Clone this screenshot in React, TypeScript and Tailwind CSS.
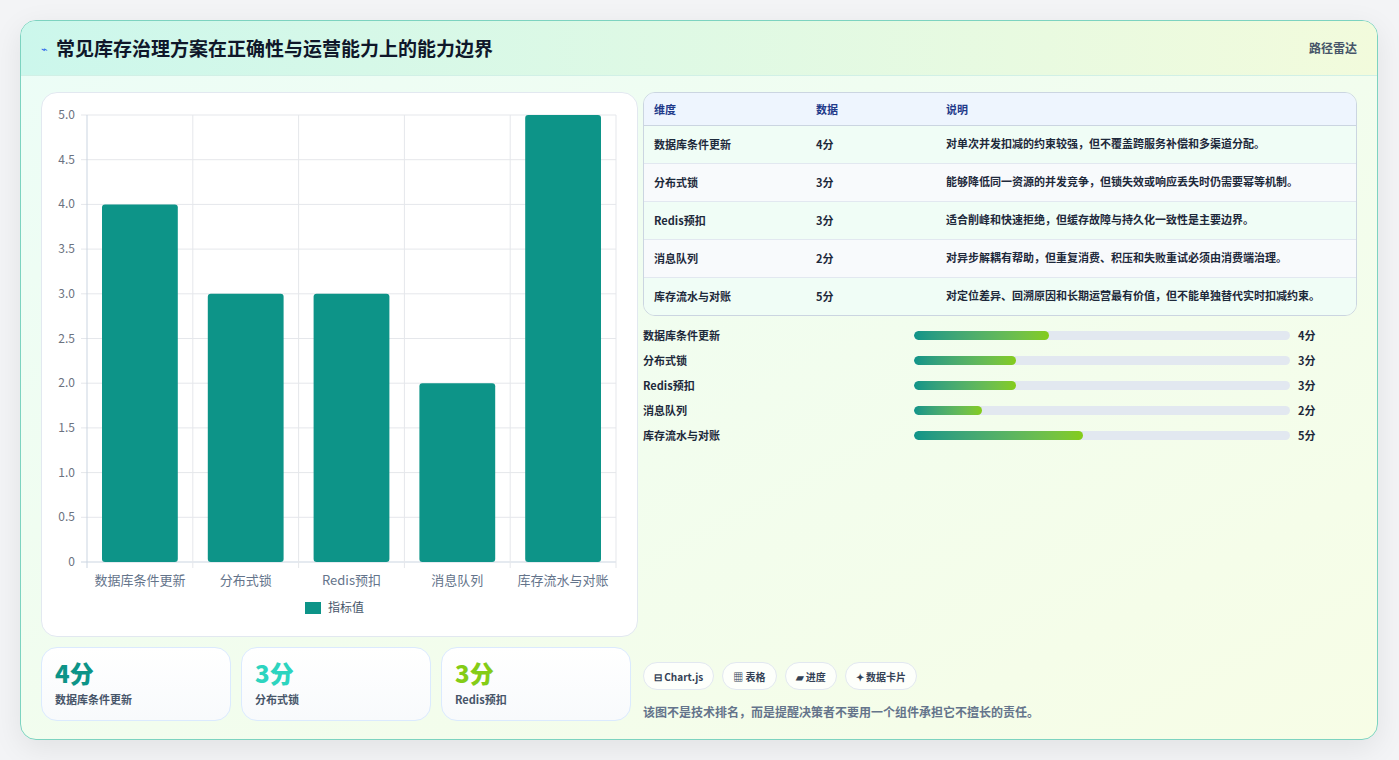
import React from "react";

const rows = [
  { n: "数据库条件更新", v: 4, d: "对单次并发扣减的约束较强，但不覆盖跨服务补偿和多渠道分配。" },
  { n: "分布式锁", v: 3, d: "能够降低同一资源的并发竞争，但锁失效或响应丢失时仍需要幂等机制。" },
  { n: "Redis预扣", v: 3, d: "适合削峰和快速拒绝，但缓存故障与持久化一致性是主要边界。" },
  { n: "消息队列", v: 2, d: "对异步解耦有帮助，但重复消费、积压和失败重试必须由消费端治理。" },
  { n: "库存流水与对账", v: 5, d: "对定位差异、回溯原因和长期运营最有价值，但不能单独替代实时扣减约束。" },
];

function Chart() {
  const x0 = 45, x1 = 574, y0 = 22, y1 = 469;
  const h = y1 - y0;
  const cw = (x1 - x0) / 5;
  const ticks = [0, 0.5, 1, 1.5, 2, 2.5, 3, 3.5, 4, 4.5, 5];
  return (
    <svg width="586" height="544" className="block" style={{ fontFamily: '"Noto Sans CJK SC", sans-serif' }}>
      {ticks.map((t) => {
        const y = y1 - (t / 5) * h;
        return (
          <g key={t}>
            <line x1={x0 - 6} x2={x1} y1={y} y2={y} stroke={t === 0 ? "#cbd5e1" : "#e5e7eb"} />
            <text x={x0 - 12} y={y + 4} fontSize="12" textAnchor="end" fill="#6b7280">{t === 0 ? "0" : t.toFixed(1)}</text>
          </g>
        );
      })}
      {[0, 1, 2, 3, 4, 5].map((i) => (
        <line key={i} x1={x0 + i * cw} x2={x0 + i * cw} y1={y0} y2={y1 + 6} stroke={i === 0 ? "#cbd5e1" : "#e5e7eb"} />
      ))}
      {rows.map((r, i) => {
        const bh = (r.v / 5) * h;
        return (
          <g key={r.n}>
            <rect x={x0 + i * cw + 15} y={y1 - bh} width={cw - 30} height={bh} rx="3" fill="#0d9488" />
            <text x={x0 + i * cw + cw / 2} y={y1 + 23} fontSize="13" textAnchor="middle" fill="#64748b">{r.n}</text>
          </g>
        );
      })}
      <rect x="263" y="509" width="16" height="12" fill="#0d9488" />
      <text x="286" y="519" fontSize="12" fill="#475569">指标值</text>
    </svg>
  );
}

export default function App() {
  const colors = ["text-[#0d9488]", "text-[#2dd4bf]", "text-[#84cc16]"];
  return (
    <div className="min-h-[760px] bg-[#f3f4f6] p-5 pb-5" style={{ fontFamily: '"Noto Sans CJK SC", "Noto Sans", sans-serif' }}>
      <div className="w-[1358px] h-[720px] rounded-2xl border border-[#7dd3c0] overflow-hidden shadow-[0_8px_30px_rgba(0,0,0,0.08)] bg-gradient-to-br from-[#ecfdf7] to-[#f7fde6] flex flex-col">
        <div className="h-[55px] flex items-center justify-between px-5 bg-gradient-to-r from-[#ccf7ec] to-[#f2fbdc] border-b border-[#d1f0e6]">
          <div className="flex items-center gap-2">
            <span className="text-[#2563eb] text-[11px]">⌁</span>
            <h1 className="text-[19px] font-bold text-[#0f172a]">常见库存治理方案在正确性与运营能力上的能力边界</h1>
          </div>
          <span className="text-[12px] font-semibold text-[#475569]">路径雷达</span>
        </div>
        <div className="flex gap-[5px] px-5 pt-4 pb-[18px] flex-1">
          <div className="w-[597px] flex flex-col gap-[10px]">
            <div className="h-[545px] rounded-2xl bg-white border border-[#e2e8f0]">
              <Chart />
            </div>
            <div className="flex gap-[10px]">
              {rows.slice(0, 3).map((r, i) => (
                <div key={r.n} className="w-[190px] h-[74px] rounded-2xl border border-[#dbeafe] bg-gradient-to-b from-white to-[#f8fafc] px-[13px] pt-[11px]">
                  <div className={`text-[24px] font-extrabold leading-[28px] ${colors[i]}`}>{r.v}分</div>
                  <div className="text-[11px] font-semibold text-[#475569] mt-[4px]">{r.n}</div>
                </div>
              ))}
            </div>
          </div>
          <div className="flex-1 flex flex-col">
            <div className="rounded-xl border border-[#cbd5e1] overflow-hidden text-[11px] font-semibold text-[#1e293b]">
              <div className="flex h-[33px] items-center bg-[#eef5fe] text-[#1e3a8a] border-b border-[#cbd5e1]">
                <div className="w-[172px] pl-[10px]">维度</div>
                <div className="w-[130px]">数据</div>
                <div className="flex-1">说明</div>
              </div>
              {rows.map((r, i) => (
                <div key={r.n} className={`flex py-[10px] border-b last:border-b-0 border-[#e2e8f0] ${i % 2 === 0 ? "bg-[#f0fdf6]" : "bg-[#f8fafc]"}`}>
                  <div className="w-[172px] pl-[10px]">{r.n}</div>
                  <div className="w-[130px]">{r.v}分</div>
                  <div className="flex-1 pr-4 leading-[19px] -mt-[2px]">{r.d}</div>
                </div>
              ))}
            </div>
            <div className="mt-[10px] flex flex-col gap-[6px]">
              {rows.map((r) => (
                <div key={r.n} className="flex items-center h-[19px] text-[11px] font-semibold text-[#1e293b]">
                  <div className="w-[271px]">{r.n}</div>
                  <div className="w-[376px] h-[9px] rounded-full bg-[#e2e8f0] overflow-hidden">
                    <div className="h-full rounded-full bg-gradient-to-r from-[#0d9488] to-[#84cc16]" style={{ width: `${r.v * 9}%` }} />
                  </div>
                  <div className="ml-2">{r.v}分</div>
                </div>
              ))}
            </div>
            <div className="mt-auto flex gap-2 text-[10px] font-semibold text-[#334155]">
              {["⊟ Chart.js", "▦ 表格", "▰ 进度", "✦ 数据卡片"].map((c) => (
                <span key={c} className="h-[28px] px-[10px] flex items-center rounded-full bg-white/80 border border-[#e2e8f0]">{c}</span>
              ))}
            </div>
            <p className="mt-[13px] text-[12px] font-semibold text-[#64748b]">该图不是技术排名，而是提醒决策者不要用一个组件承担它不擅长的责任。</p>
          </div>
        </div>
      </div>
    </div>
  );
}
